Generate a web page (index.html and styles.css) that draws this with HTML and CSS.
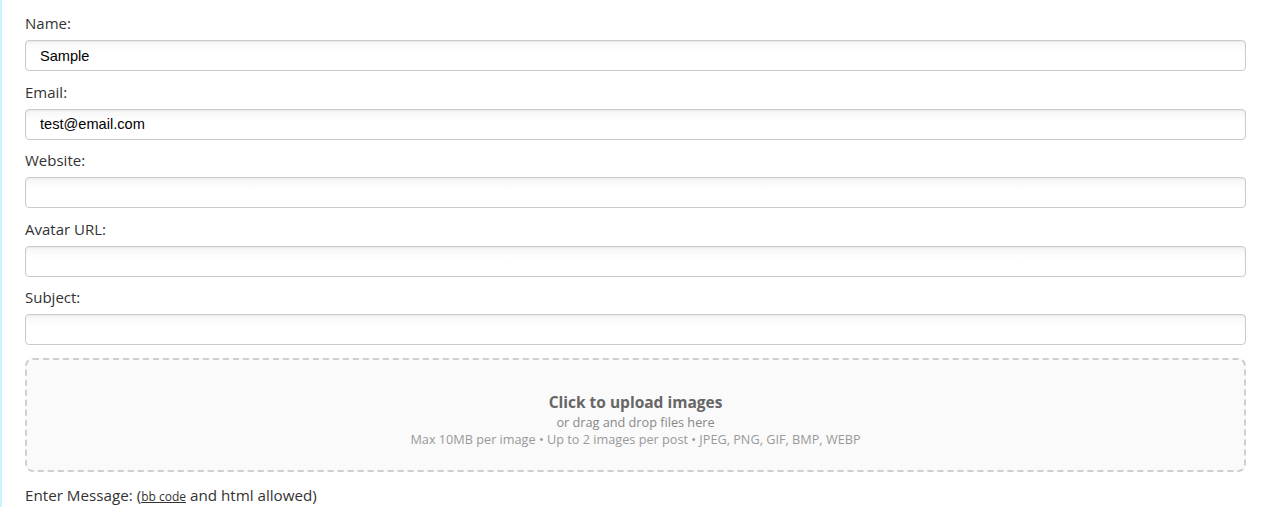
FILE: index.html
```html
<!DOCTYPE html>
<html lang="en">
<head>
<meta charset="utf-8">
<title>Post form</title>
<link rel="stylesheet" href="styles.css">
</head>
<body>
<div class="page">
  <form class="form">
    <div class="field">
      <label class="label" for="name">Name:</label>
      <input class="input" id="name" type="text" value="Sample">
    </div>
    <div class="field">
      <label class="label" for="email">Email:</label>
      <input class="input" id="email" type="text" value="test@email.com">
    </div>
    <div class="field">
      <label class="label" for="website">Website:</label>
      <input class="input" id="website" type="text">
    </div>
    <div class="field">
      <label class="label" for="avatar">Avatar URL:</label>
      <input class="input" id="avatar" type="text">
    </div>
    <div class="field">
      <label class="label" for="subject">Subject:</label>
      <input class="input" id="subject" type="text">
    </div>
    <div class="upload">
      <div class="upload-title">Click to upload images</div>
      <div class="upload-sub">or drag and drop files here</div>
      <div class="upload-info">Max 10MB per image • Up to 2 images per post • JPEG, PNG, GIF, BMP, WEBP</div>
    </div>
    <div class="message-label">Enter Message: (<a class="bb" href="#">bb code</a> and html allowed)</div>
  </form>
</div>
</body>
</html>
```
FILE: styles.css
```css
html, body {
  margin: 0;
  padding: 0;
  background: #fff;
}
.page {
  border-left: 2px solid #cdf3ff;
  min-height: 507px;
  box-sizing: border-box;
  padding: 13px 19px 0 23px;
  font-family: "Open Sans", "Liberation Sans", sans-serif;
  color: #333;
}
.form {
  display: flex;
  flex-direction: column;
}
.field {
  display: flex;
  flex-direction: column;
  margin-bottom: 10.5px;
}
.label {
  font-size: 15px;
  line-height: 20px;
  margin-bottom: 7px;
}
.input {
  box-sizing: border-box;
  height: 31px;
  margin: 0;
  padding: 0 14px;
  border: 1px solid #cbcbcb;
  border-radius: 4px;
  background: linear-gradient(#f6f6f6, #fff 40%, #fff);
  box-shadow: inset 0 1px 2px rgba(0,0,0,0.06);
  font-family: "Liberation Sans", Arial, sans-serif;
  font-size: 14.6px;
  color: #000;
  outline: none;
}
.upload {
  margin-top: 2px;
  height: 114px;
  box-sizing: border-box;
  border: 2px dashed #cfcfcf;
  border-radius: 8px;
  background: #fafafa;
  padding-top: 32px;
  display: flex;
  flex-direction: column;
  align-items: center;
  text-align: center;
}
.upload-title {
  font-size: 15.5px;
  line-height: 20px;
  font-weight: 700;
  color: #666;
  margin-bottom: 1px;
}
.upload-sub {
  font-size: 12.7px;
  line-height: 18px;
  color: #888;
}
.upload-info {
  font-size: 12.7px;
  line-height: 17px;
  color: #999;
}
.message-label {
  margin-top: 13px;
  font-size: 15.2px;
  line-height: 20px;
}
.bb {
  font-size: 12px;
  color: #333;
  text-decoration: underline;
}
```
